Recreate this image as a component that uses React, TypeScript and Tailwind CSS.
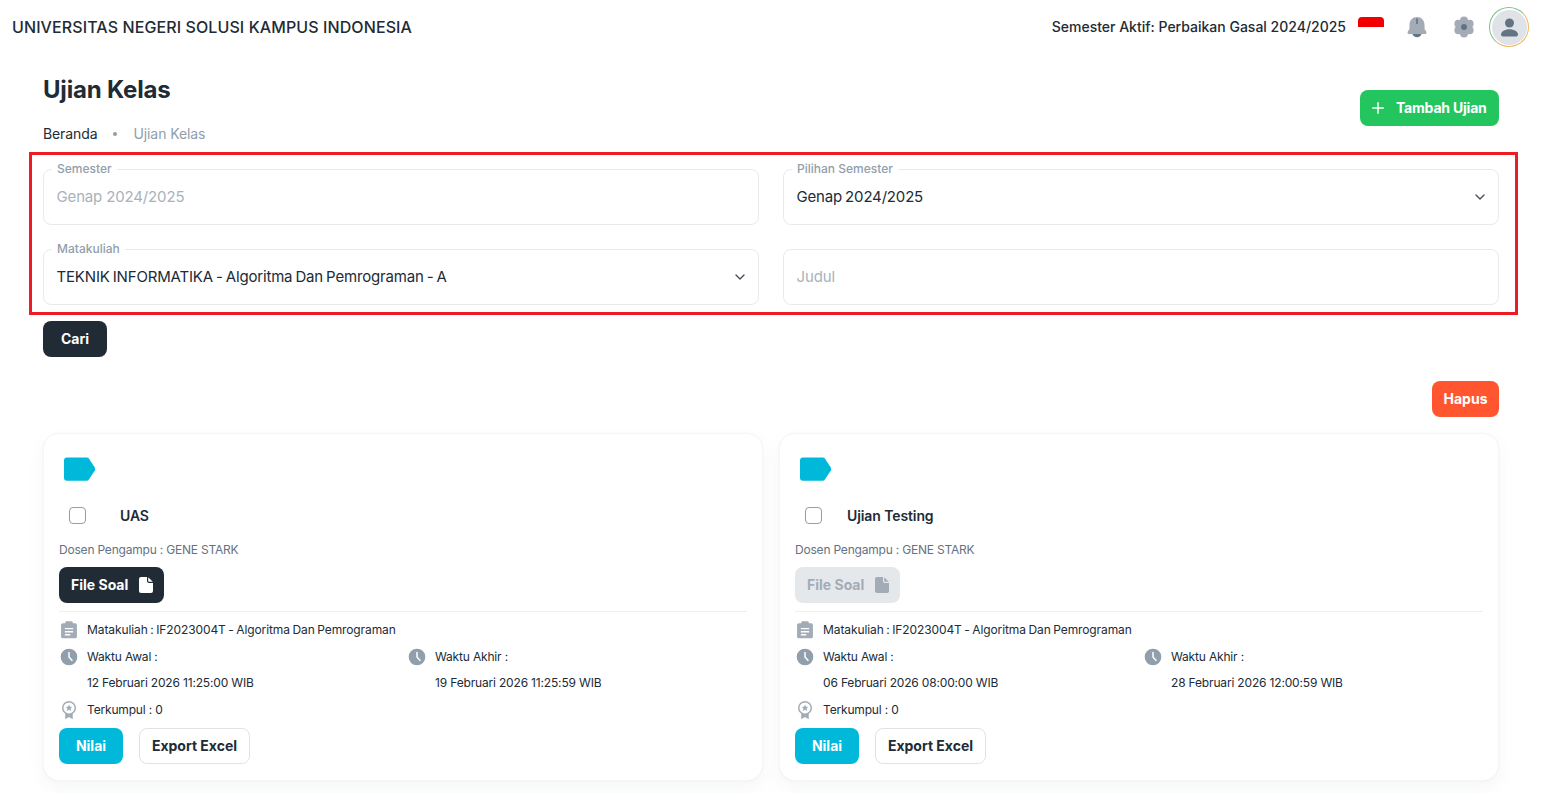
import { ChevronDown, Plus } from 'lucide-react'

const font = { fontFamily: 'Inter' }

function Bell() {
  return (
    <svg viewBox="0 0 24 24" className="w-6 h-6">
      <path fill="#a3acb6" d="M12 2c-4.500 0-7.500 3.500-7.500 8v3.500c0 1.500-2 2.500-2 4 0 1 .8 1.500 1.700 1.500h15.600c.9 0 1.700-.5 1.700-1.500 0-1.500-2-2.500-2-4V10c0-4.500-3-8-7.500-8z" />
      <path fill="#637381" d="M7.500 19h9c-.4 2-2.300 3.200-4.500 3.200S7.900 21 7.500 19z" />
      <path fill="#637381" d="M11.200 3.500h1.600v5.500h-1.600z" />
    </svg>
  )
}

function Gear() {
  return (
    <svg viewBox="0 0 24 24" className="w-6 h-6">
      <g fill="#a3acb6">
        <circle cx="12" cy="12" r="7.500" />
        <circle cx="12" cy="5.500" r="4" />
        <circle cx="17.600" cy="8.750" r="4" />
        <circle cx="17.600" cy="15.250" r="4" />
        <circle cx="12" cy="18.500" r="4" />
        <circle cx="6.400" cy="15.250" r="4" />
        <circle cx="6.400" cy="8.750" r="4" />
      </g>
      <circle cx="12" cy="12" r="3" fill="#637381" />
    </svg>
  )
}

function FileIcon({ color }: { color: string }) {
  return (
    <svg viewBox="0 0 14 16" className="w-[14px] h-[16px]">
      <path fill={color} d="M2 0h6v4a2 2 0 0 0 2 2h4v8a2 2 0 0 1-2 2H2a2 2 0 0 1-2-2V2a2 2 0 0 1 2-2z" />
      <path fill={color} d="M9.200 0.200 13.800 4.800H10a.8.8 0 0 1-.8-.8z" />
    </svg>
  )
}

function Clipboard() {
  return (
    <svg viewBox="0 0 24 24" className="w-[20px] h-[20px] shrink-0">
      <path fill="#a3acb6" fillRule="evenodd" d="M8.500 1.500h7a1 1 0 0 1 1 1V4h3a2 2 0 0 1 2 2v14a2 2 0 0 1-2 2h-15a2 2 0 0 1-2-2V6a2 2 0 0 1 2-2h3V2.500a1 1 0 0 1 1-1zM7 9.500v1.700h10V9.500zm0 3.700v1.700h10v-1.700zm0 3.700v1.700h6.500v-1.700z" />
    </svg>
  )
}

function Clock() {
  return (
    <svg viewBox="0 0 24 24" className="w-[20px] h-[20px] shrink-0">
      <circle cx="12" cy="12" r="10" fill="#919eab" />
      <path d="M12 6.500V12l3.500 4" fill="none" stroke="#fff" strokeWidth="1.800" strokeLinecap="round" />
    </svg>
  )
}

function Medal() {
  return (
    <svg viewBox="0 0 24 24" className="w-[20px] h-[20px] shrink-0">
      <path fill="#a3acb6" d="M7.500 15h9v8l-4.500-2.500L7.500 23z" />
      <circle cx="12" cy="9.500" r="7.500" fill="#fff" stroke="#a3acb6" strokeWidth="1.800" />
      <path fill="#a3acb6" d="m12 5.500 1.200 2.600 2.800.3-2.100 1.900.6 2.800-2.500-1.400-2.500 1.400.6-2.800L8 8.400l2.800-.3z" />
    </svg>
  )
}

function Field({ label, value, muted, select }: { label?: string; value: string; muted?: boolean; select?: boolean }) {
  return (
    <div className="relative h-[56px] border border-[#e7eaed] rounded-lg flex items-center justify-between pl-[12.500px] pr-[10px]">
      {label && (
        <span className="absolute left-[8px] top-[-8px] bg-white px-[5px] text-[12px] leading-[14px] font-medium text-[#919eab]">{label}</span>
      )}
      <span className={muted ? 'text-[15px] tracking-[-0.15px] text-[#a9b2bb]' : 'text-[15px] tracking-[-0.17px] [word-spacing:-1px] text-[#212b36]'}>{value}</span>
      {select && <ChevronDown className="w-[16px] h-[16px] text-[#454f5b]" strokeWidth={2} />}
    </div>
  )
}

type Exam = {
  title: string
  active: boolean
  start: string
  end: string
  gap: string
}

function ExamCard({ exam }: { exam: Exam }) {
  return (
    <div className="h-[348px] rounded-2xl bg-white border border-[#f6f7f8] shadow-[0_0_2px_rgba(145,158,171,0.12),0_8px_16px_rgba(145,158,171,0.08)] px-[15px] pt-[23px]">
      <svg viewBox="0 0 32 24" className="w-[31px] h-[24px] ml-[5px]">
        <path fill="#00b8d9" d="M3 0h20.500c.8 0 1.500.4 2 1L32 10.800c.4.8.4 1.600 0 2.400L25.500 23c-.5.6-1.200 1-2 1H3a3 3 0 0 1-3-3V3a3 3 0 0 1 3-3z" />
      </svg>
      <div className="flex items-center h-[24px] mt-[22px] ml-[10px]">
        <span className="w-[17px] h-[17px] rounded-[4px] border-[1.500px] border-[#919eab]" />
        <span className={`text-[14px] font-semibold tracking-[-0.1px] text-[#212b36] ${exam.gap}`}>{exam.title}</span>
      </div>
      <p className="mt-[14px] text-[12px] leading-[18px] tracking-[-0.2px] text-[#637381]">Dosen Pengampu : GENE STARK</p>
      <div className="mt-[8px] pb-[8px] border-b border-[#eceef0]">
        {exam.active ? (
          <div className="inline-flex items-center gap-[11px] h-[36px] pl-[12px] pr-[11px] rounded-lg bg-[#212b36] text-white text-[14px] font-bold">
            <span className="pb-[1px]">File Soal</span> <FileIcon color="#ffffff" />
          </div>
        ) : (
          <div className="inline-flex items-center gap-[11px] h-[36px] pl-[12px] pr-[11px] rounded-lg bg-[#e5e8eb] text-[#a3acb6] text-[14px] font-bold">
            <span className="pb-[1px]">File Soal</span> <FileIcon color="#a3acb6" />
          </div>
        )}
      </div>
      <div className="mt-[8px] flex items-center gap-[8px] h-[20px] text-[12px] tracking-[-0.1px] [word-spacing:-0.7px] text-[#212b36]">
        <Clipboard />
        Matakuliah : IF2023004T - Algoritma Dan Pemrograman
      </div>
      <div className="grid grid-cols-[348px_1fr] mt-[7px] text-[12px] tracking-[-0.17px] text-[#212b36]">
        <div>
          <div className="flex items-center gap-[8px] h-[20px]">
            <Clock /> Waktu Awal :
          </div>
          <p className="ml-[28px] mt-[6px] h-[20px] leading-[20px]">{exam.start}</p>
        </div>
        <div>
          <div className="flex items-center gap-[8px] h-[20px]">
            <Clock /> Waktu Akhir :
          </div>
          <p className="ml-[28px] mt-[6px] h-[20px] leading-[20px]">{exam.end}</p>
        </div>
      </div>
      <div className="mt-[7px] flex items-center gap-[8px] h-[20px] text-[12px] tracking-[-0.17px] text-[#212b36]">
        <Medal />
        Terkumpul : 0
      </div>
      <div className="mt-[8px] flex gap-[16px]">
        <div className="h-[36px] w-[64px] pb-[1px] rounded-lg bg-[#00b8d9] text-white text-[14px] font-bold flex items-center justify-center">Nilai</div>
        <div className="h-[36px] w-[111px] pb-[1px] rounded-lg bg-white border border-[#dfe3e8] text-[#212b36] text-[14px] font-bold flex items-center justify-center">Export Excel</div>
      </div>
    </div>
  )
}

export default function App() {
  return (
    <div className="min-h-screen bg-white overflow-hidden" style={font}>
      <header className="h-[54px] flex items-center justify-between pl-[12px] pr-[16px]">
        <h2 className="text-[16px] font-medium tracking-[0.1px] text-[#212b36] mb-[1px]">UNIVERSITAS NEGERI SOLUSI KAMPUS INDONESIA</h2>
        <div className="flex items-center">
          <span className="text-[14px] font-medium text-[#212b36] mb-[1px]">Semester Aktif: Perbaikan Gasal 2024/2025</span>
          <div className="ml-[12px] w-[26px] h-[20px]">
            <div className="h-[10px] bg-[#f00000] rounded-t-[4px]" />
          </div>
          <div className="ml-[21px]"><Bell /></div>
          <div className="ml-[23px]"><Gear /></div>
          <div className="ml-[13px] w-[40px] h-[40px] rounded-full border border-[#7fbf8b] border-r-[#f0b860] border-b-[#f0b860] flex items-center justify-center">
            <div className="w-[35px] h-[35px] rounded-full bg-[#dfe3e8] flex items-center justify-center">
              <svg viewBox="0 0 24 24" className="w-[27px] h-[27px]">
                <circle cx="12" cy="8" r="4" fill="#637381" />
                <path fill="#637381" d="M12 13.500c-4.200 0-7.500 2.100-7.500 4.500v.5c0 .8.700 1.500 1.500 1.500h12c.8 0 1.500-.7 1.500-1.500V18c0-2.400-3.300-4.500-7.500-4.500z" />
              </svg>
            </div>
          </div>
        </div>
      </header>

      <main className="px-[43px] pr-[46px]">
        <div className="flex items-start justify-between h-[98px]">
          <div>
            <h1 className="text-[24px] leading-[36px] font-bold tracking-[-0.2px] text-[#212b36] mt-[18px]">Ujian Kelas</h1>
            <div className="flex items-center text-[14px] tracking-[-0.1px] mt-[15px] leading-[22px]">
              <span className="text-[#212b36]">Beranda</span>
              <span className="w-[4px] h-[4px] rounded-full bg-[#919eab] mx-[16px]" />
              <span className="text-[#919eab]">Ujian Kelas</span>
            </div>
          </div>
          <div className="mt-[36px] h-[36px] w-[139px] pl-[9px] rounded-lg bg-[#22c55e] text-white text-[14px] font-bold flex items-center gap-[9px]">
            <Plus className="w-[18px] h-[18px]" strokeWidth={2} /> <span className="tracking-[-0.2px] pb-[1px]">Tambah Ujian</span>
          </div>
        </div>

        <div className="-mx-[14px] -mr-[19px] border-[3px] border-[#ed1c24] px-[11px] pr-[16px] pt-[14px] pb-[7px]">
          <div className="grid grid-cols-2 gap-x-[24px] gap-y-[24px]">
            <Field label="Semester" value="Genap 2024/2025" muted />
            <Field label="Pilihan Semester" value="Genap 2024/2025" select />
            <Field label="Matakuliah" value="TEKNIK INFORMATIKA - Algoritma Dan Pemrograman - A" select />
            <Field value="Judul" muted />
          </div>
        </div>

        <div className="mt-[6px] h-[36px] w-[64px] pb-[1px] rounded-lg bg-[#212b36] text-white text-[14px] font-bold flex items-center justify-center">Cari</div>

        <div className="flex justify-end mt-[24px]">
          <div className="h-[36px] w-[67px] pb-[1px] rounded-lg bg-[#ff5630] text-white text-[14px] font-bold flex items-center justify-center">Hapus</div>
        </div>

        <div className="grid grid-cols-2 gap-[16px] mt-[16px]">
          <ExamCard exam={{ title: 'UAS', active: true, start: '12 Februari 2026 11:25:00 WIB', end: '19 Februari 2026 11:25:59 WIB', gap: 'ml-[34px]' }} />
          <ExamCard exam={{ title: 'Ujian Testing', active: false, start: '06 Februari 2026 08:00:00 WIB', end: '28 Februari 2026 12:00:59 WIB', gap: 'ml-[25px]' }} />
        </div>
      </main>
    </div>
  )
}
